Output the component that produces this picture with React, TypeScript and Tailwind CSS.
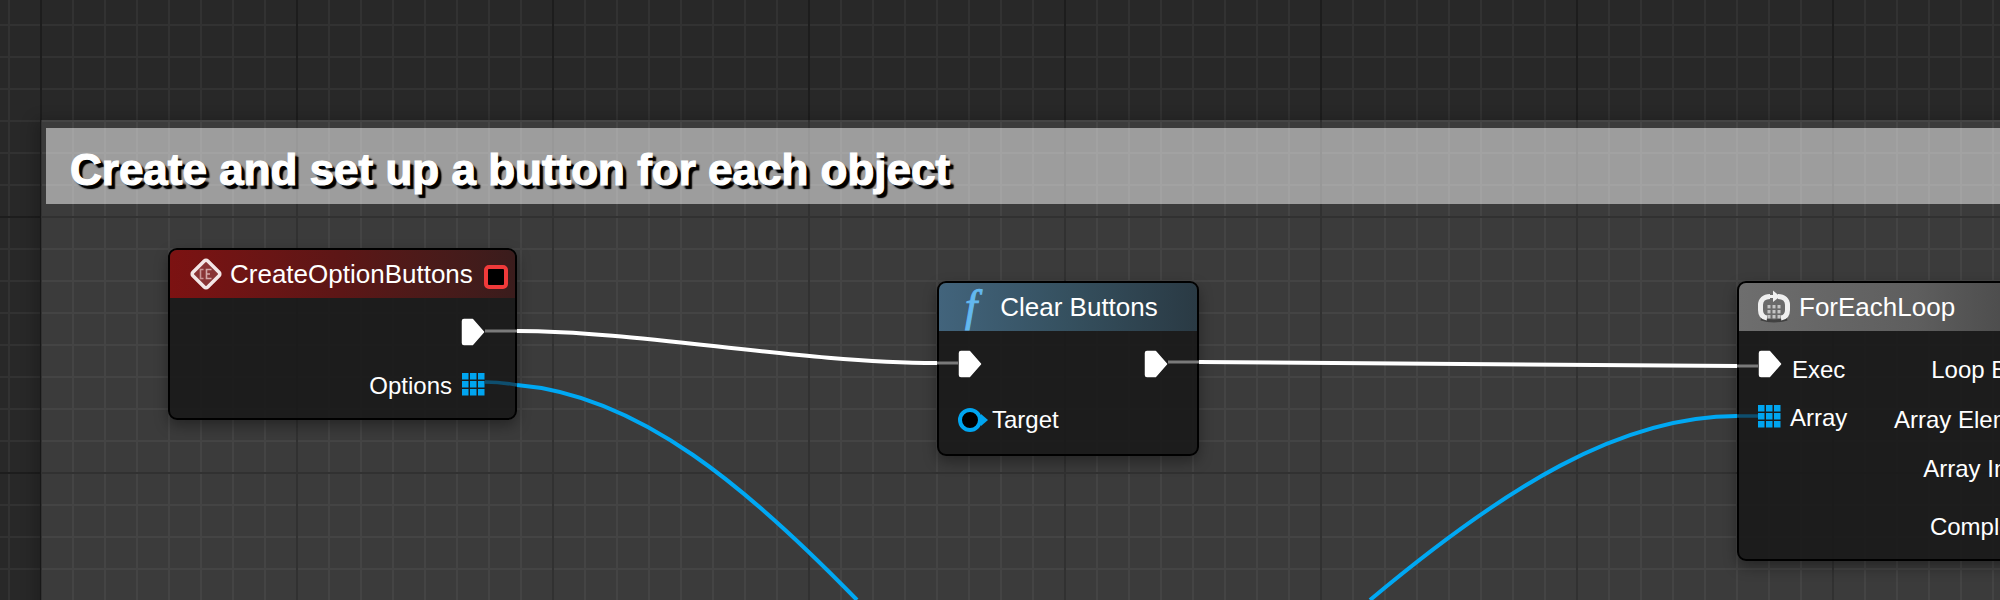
import React from "react";

const ExecPin = () => (
  <svg width="24" height="28" viewBox="0 0 24 28" className="shrink-0">
    <path d="M3 1.5H11.5L22.5 14L11.5 26.5H3Q1.5 26.5 1.5 25V3Q1.5 1.5 3 1.5Z" fill="#fff" stroke="#fff" strokeWidth="1.5" strokeLinejoin="round" />
  </svg>
);

const ArrayPin = () => (
  <svg width="23" height="23" viewBox="0 0 23 23" className="shrink-0">
    {[0, 8, 16].map((y) =>
      [0, 8, 16].map((x) => <rect key={`${x}-${y}`} x={x} y={y} width="6.5" height="6.5" fill="#00a5f0" />)
    )}
  </svg>
);

const TargetPin = () => (
  <svg width="30" height="24" viewBox="0 0 30 24" className="shrink-0">
    <circle cx="12" cy="12" r="10" fill="#000" stroke="#00a5f0" strokeWidth="4" />
    <path d="M23 6L30 12L23 18Z" fill="#00a5f0" />
  </svg>
);

const EventIcon = () => (
  <svg width="32" height="32" viewBox="0 0 32 32" className="shrink-0">
    <rect x="5.5" y="5.5" width="21" height="21" rx="2.5" transform="rotate(45 16 16)" fill="#a8666a" fillOpacity="0.4" stroke="#f3e6e6" strokeWidth="3.5" />
    <path d="M13.5 11.5H10.5V20.5H13.5" fill="none" stroke="#d9aeae" strokeWidth="1.6" opacity="0.8" />
    <path d="M21.5 11.5H16.5V20.5H21.5M16.5 16H20" fill="none" stroke="#e6c4c4" strokeWidth="1.6" opacity="0.8" />
  </svg>
);

const LoopIcon = () => (
  <svg width="34" height="34" viewBox="0 0 34 34" className="shrink-0">
    <path d="M4 29Q17 33 30 29" fill="none" stroke="#2f2f2f" strokeWidth="3" opacity="0.7" />
    <path d="M13 6.5C7 6.5 3.5 10 3.5 15V20C3.5 25 6 27.5 10 28" fill="none" stroke="#efefef" strokeWidth="5" />
    <path d="M21 6.5C27 6.5 30.5 10 30.5 15V20C30.5 25 28 27.5 24 28" fill="none" stroke="#efefef" strokeWidth="5" />
    <path d="M11 6.5H20" fill="none" stroke="#efefef" strokeWidth="3" />
    <path d="M16 0.5L23 6.5L16 12Z" fill="#efefef" />
    {[15, 20, 25].map((y) =>
      [10.5, 15.5, 20.5].map((x) => <rect key={`${x}-${y}`} x={x} y={y} width="3" height="3.4" fill="#c4c4c4" />)
    )}
  </svg>
);

function Node({
  className,
  headerClass,
  title,
  icon,
  titleClass,
  children,
}: {
  className: string;
  headerClass: string;
  title: string;
  icon: React.ReactNode;
  titleClass: string;
  children: React.ReactNode;
}) {
  return (
    <div
      className={`absolute flex flex-col overflow-hidden rounded-[9px] border-2 border-black bg-[rgba(25,25,25,0.9)] shadow-[0_6px_14px_rgba(0,0,0,0.35)] ${className}`}
    >
      <div className={`flex h-[48px] shrink-0 items-center text-[26px] text-white ${headerClass}`}>
        {icon}
        <span className={titleClass}>{title}</span>
      </div>
      {children}
    </div>
  );
}

export default function App() {
  return (
    <div className="relative h-[600px] w-[2000px] overflow-hidden bg-[#282828] bg-[image:linear-gradient(90deg,#1d1d1d_2px,transparent_2px),linear-gradient(180deg,#1d1d1d_2px,transparent_2px),linear-gradient(90deg,#323232_2px,transparent_2px),linear-gradient(180deg,#323232_2px,transparent_2px)] bg-[size:256px_256px,256px_256px,32px_32px,32px_32px] bg-[position:40px_0,0_216px,8px_0,0_24px] font-['Liberation_Sans',Arial,sans-serif]">
      {/* comment box */}
      <div className="absolute bottom-[-40px] left-[41px] right-[-40px] top-[120px] bg-[rgba(255,255,255,0.09)] pt-[8px] pl-[5px] shadow-[-6px_0_14px_rgba(0,0,0,0.22)]">
        <div className="flex h-[76px] items-center bg-[rgba(255,255,255,0.5)] pl-[24px] pt-[8px] text-[44px] font-bold text-white [-webkit-text-stroke:1.2px_#fff] [text-shadow:4px_4px_1px_#000,3px_3px_2px_#000]">
          Create and set up a button for each object
        </div>
      </div>

      <Node
        className="left-[168px] top-[248px] h-[172px] w-[349px]"
        headerClass="bg-gradient-to-r from-[#7c1212] via-[#5c1616] to-[#3a1c1c] pl-[20px]"
        title="CreateOptionButtons"
        titleClass="ml-[8px] flex-1"
        icon={<EventIcon />}
      >
        <div className="flex flex-col items-end pr-[30px] pt-[20px]">
          <ExecPin />
          <div className="mt-[20px] flex items-center gap-[10px] text-[24px] text-white">
            <span className="translate-y-[2px]">Options</span>
            <ArrayPin />
          </div>
        </div>
        <span className="absolute right-[7px] top-[15px] h-[24px] w-[24px] rounded-[5px] border-[4px] border-[#f03a3a] bg-black" />
      </Node>

      <Node
        className="left-[937px] top-[281px] h-[175px] w-[262px]"
        headerClass="bg-gradient-to-r from-[#42647c] via-[#35505f] to-[#2a3a44] pl-[26px]"
        title="Clear Buttons"
        titleClass="ml-[23px]"
        icon={<span className="font-['Liberation_Serif',serif] text-[44px] italic leading-[46px] text-[#63b8ef] [-webkit-text-stroke:1px_#63b8ef]">f</span>}
      >
        <div className="flex flex-col px-[19px] pt-[19px]">
          <div className="flex items-center justify-between pr-[10px]">
            <ExecPin />
            <ExecPin />
          </div>
          <div className="mt-[24px] flex items-center gap-[4px] text-[24px] text-white">
            <TargetPin />
            <span>Target</span>
          </div>
        </div>
      </Node>

      <Node
        className="left-[1737px] top-[281px] h-[280px] w-[360px]"
        headerClass="bg-gradient-to-r from-[#6e6e6e] via-[#5e5e5e] to-[#3c3c3c] pl-[18px]"
        title="ForEachLoop"
        titleClass="ml-[8px]"
        icon={<LoopIcon />}
      >
        <div className="flex justify-between pl-[19px] pr-[49px] pt-[19px] text-[24px] text-white">
          <div className="flex flex-col">
            <div className="flex h-[28px] items-center gap-[10px]">
              <ExecPin />
              <span className="translate-y-[6px]">Exec</span>
            </div>
            <div className="mt-[20px] flex items-center gap-[9px]">
              <ArrayPin />
              <span className="translate-y-[2px]">Array</span>
            </div>
          </div>
          <div className="flex flex-col items-end leading-[28px]">
            <span className="mt-[6px]">Loop Body</span>
            <span className="mt-[22px]">Array Element</span>
            <span className="mt-[21px]">Array Index</span>
            <span className="mt-[30px]">Completed</span>
          </div>
        </div>
      </Node>

      {/* wires */}
      <svg className="pointer-events-none absolute left-0 top-0" width="2000" height="600" viewBox="0 0 2000 600" fill="none">
        <path d="M517 331C640 331 800 363 937 363" stroke="#fff" strokeWidth="4" />
        <path d="M1199 362C1400 364 1600 366 1737 366" stroke="#fff" strokeWidth="4" />
        <path d="M485 331H517" stroke="#7a7a7a" strokeWidth="3" />
        <path d="M937 363H958" stroke="#7a7a7a" strokeWidth="3" />
        <path d="M1168 362H1199" stroke="#7a7a7a" strokeWidth="3" />
        <path d="M1737 366H1758" stroke="#7a7a7a" strokeWidth="3" />
        <path d="M517 385C640 395 750 490 857 600" stroke="#00a8f3" strokeWidth="4" />
        <path d="M1737 416C1620 416 1505 487 1370 600" stroke="#00a8f3" strokeWidth="4" />
        <path d="M485 382Q500 382 517 385" stroke="#0e4e6e" strokeWidth="3.5" />
        <path d="M1737 416H1758" stroke="#0e4e6e" strokeWidth="3.5" />
      </svg>
    </div>
  );
}
